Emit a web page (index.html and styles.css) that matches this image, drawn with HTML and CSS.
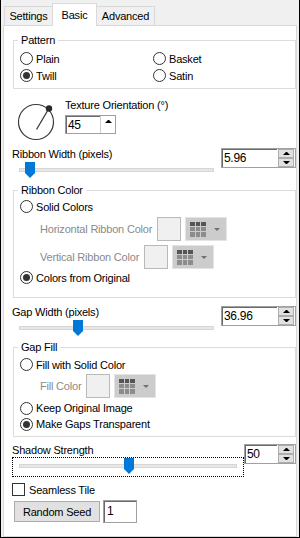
FILE: index.html
```html
<!DOCTYPE html>
<html lang="en">
<head>
<meta charset="utf-8">
<title>Basic</title>
<link rel="stylesheet" href="styles.css">
</head>
<body>
<div class="frame">
  <div class="tabs">
    <div class="tab tab-settings">Settings</div>
    <div class="tab tab-basic active">Basic</div>
    <div class="tab tab-advanced">Advanced</div>
  </div>
  <div class="panel">
    <fieldset class="group group-pattern">
      <legend>Pattern</legend>
      <div class="radio-grid">
        <div class="opt"><span class="rb"></span>Plain</div>
        <div class="opt"><span class="rb"></span>Basket</div>
        <div class="opt"><span class="rb on"></span>Twill</div>
        <div class="opt"><span class="rb"></span>Satin</div>
      </div>
    </fieldset>

    <div class="orient">
      <svg class="dial" viewBox="0 0 40 40" width="40" height="40">
        <circle cx="20" cy="20" r="17.5" fill="none" stroke="#3a3a3a" stroke-width="1.2"/>
        <line x1="20.5" y1="27.5" x2="32" y2="8" stroke="#3a3a3a" stroke-width="1.3"/>
        <circle cx="33" cy="6.5" r="3.2" fill="#2a2a2a"/>
      </svg>
      <div class="orient-col">
        <div class="lbl">Texture Orientation (°)</div>
        <div class="num num-angle"><span class="val">45</span><span class="spin spin-half"><b class="up"></b></span></div>
      </div>
    </div>

    <div class="param param-ribbon">
      <div class="param-left">
        <div class="lbl">Ribbon Width (pixels)</div>
        <div class="slider">
          <div class="track"></div>
          <svg class="thumb" style="left:12px" viewBox="0 0 10 16" width="10" height="16"><path d="M0 0H10V11L5 16L0 11Z" fill="#0078d7"/></svg>
        </div>
      </div>
      <div class="num num-wide"><span class="val">5.96</span><span class="spin"><b class="up"></b><b class="down"></b></span></div>
    </div>

    <fieldset class="group group-ribbon">
      <legend>Ribbon Color</legend>
      <div class="opt row-first"><span class="rb"></span>Solid Colors</div>
      <div class="color-row row-h">
        <span class="dim">Horizontal Ribbon Color</span>
        <span class="swatch"></span>
        <span class="drop">
          <svg class="grid-ico" viewBox="0 0 16 15" width="16" height="15">
            <rect x="0" y="0" width="5" height="4" fill="#555"/><rect x="6" y="0" width="4" height="4" fill="#555"/><rect x="11" y="0" width="5" height="4" fill="#555"/>
            <rect x="0" y="5" width="5" height="4" fill="#8c8c8c"/><rect x="6" y="5" width="4" height="4" fill="#8c8c8c"/><rect x="11" y="5" width="5" height="4" fill="#8c8c8c"/>
            <rect x="0" y="10" width="5" height="5" fill="#8c8c8c"/><rect x="6" y="10" width="4" height="5" fill="#8c8c8c"/><rect x="11" y="10" width="5" height="5" fill="#8c8c8c"/>
          </svg>
          <span class="caret"></span>
        </span>
      </div>
      <div class="color-row row-v">
        <span class="dim">Vertical Ribbon Color</span>
        <span class="swatch"></span>
        <span class="drop">
          <svg class="grid-ico" viewBox="0 0 16 15" width="16" height="15">
            <rect x="0" y="0" width="5" height="4" fill="#555"/><rect x="6" y="0" width="4" height="4" fill="#555"/><rect x="11" y="0" width="5" height="4" fill="#555"/>
            <rect x="0" y="5" width="5" height="4" fill="#8c8c8c"/><rect x="6" y="5" width="4" height="4" fill="#8c8c8c"/><rect x="11" y="5" width="5" height="4" fill="#8c8c8c"/>
            <rect x="0" y="10" width="5" height="5" fill="#8c8c8c"/><rect x="6" y="10" width="4" height="5" fill="#8c8c8c"/><rect x="11" y="10" width="5" height="5" fill="#8c8c8c"/>
          </svg>
          <span class="caret"></span>
        </span>
      </div>
      <div class="opt"><span class="rb on"></span>Colors from Original</div>
    </fieldset>

    <div class="param param-gap">
      <div class="param-left">
        <div class="lbl">Gap Width (pixels)</div>
        <div class="slider">
          <div class="track"></div>
          <svg class="thumb" style="left:60px" viewBox="0 0 10 16" width="10" height="16"><path d="M0 0H10V11L5 16L0 11Z" fill="#0078d7"/></svg>
        </div>
      </div>
      <div class="num num-wide"><span class="val">36.96</span><span class="spin"><b class="up"></b><b class="down"></b></span></div>
    </div>

    <fieldset class="group group-gap">
      <legend>Gap Fill</legend>
      <div class="opt row-first"><span class="rb"></span>Fill with Solid Color</div>
      <div class="color-row row-fill">
        <span class="dim">Fill Color</span>
        <span class="swatch"></span>
        <span class="drop">
          <svg class="grid-ico" viewBox="0 0 16 15" width="16" height="15">
            <rect x="0" y="0" width="5" height="4" fill="#555"/><rect x="6" y="0" width="4" height="4" fill="#555"/><rect x="11" y="0" width="5" height="4" fill="#555"/>
            <rect x="0" y="5" width="5" height="4" fill="#8c8c8c"/><rect x="6" y="5" width="4" height="4" fill="#8c8c8c"/><rect x="11" y="5" width="5" height="4" fill="#8c8c8c"/>
            <rect x="0" y="10" width="5" height="5" fill="#8c8c8c"/><rect x="6" y="10" width="4" height="5" fill="#8c8c8c"/><rect x="11" y="10" width="5" height="5" fill="#8c8c8c"/>
          </svg>
          <span class="caret"></span>
        </span>
      </div>
      <div class="opt opt-tight row-keep"><span class="rb"></span>Keep Original Image</div>
      <div class="opt opt-tight"><span class="rb on"></span>Make Gaps Transparent</div>
    </fieldset>

    <div class="param param-shadow">
      <div class="param-left">
        <div class="lbl">Shadow Strength</div>
        <div class="slider focused">
          <div class="track"></div>
          <svg class="thumb" style="left:111px" viewBox="0 0 10 16" width="10" height="16"><path d="M0 0H10V11L5 16L0 11Z" fill="#0078d7"/></svg>
        </div>
      </div>
      <div class="num num-short"><span class="val">50</span><span class="spin"><b class="up"></b><b class="down"></b></span></div>
    </div>

    <div class="check-row"><span class="cb"></span>Seamless Tile</div>

    <div class="seed-row">
      <button class="btn" type="button">Random Seed</button>
      <span class="seed-box">1</span>
    </div>
  </div>
</div>
</body>
</html>
```

FILE: styles.css
```css
* { box-sizing: border-box; }

html, body {
  margin: 0;
  padding: 0;
}

body {
  width: 300px;
  height: 538px;
  overflow: hidden;
  background: #f0f0f0;
  color: #000;
  font-family: "Liberation Sans", Arial, sans-serif;
  font-size: 11px;
  letter-spacing: -0.2px;
}

.frame {
  width: 300px;
  height: 538px;
  border: 1px solid #000;
  border-top: 0;
  background: #f0f0f0;
  display: flex;
  flex-direction: column;
}

/* ---------- tabs ---------- */
.tabs {
  height: 25px;
  flex: none;
  display: flex;
  align-items: flex-end;
  padding-left: 3px;
  position: relative;
  z-index: 1;
}

.tab {
  height: 19px;
  border: 1px solid #d9d9d9;
  border-bottom: 0;
  background: #f0f0f0;
  display: flex;
  align-items: center;
  justify-content: center;
  line-height: 14px;
  white-space: nowrap;
}

.tab-settings { width: 49px; }
.tab-basic { width: 45px; margin-left: -1px; }
.tab-advanced { width: 59px; margin-left: -1px; }

.tab.active {
  height: 23px;
  margin-bottom: -1px;
  background: #fff;
  position: relative;
  z-index: 2;
}

/* ---------- panel ---------- */
.panel {
  flex: 1;
  margin: 0 2px;
  background: #fff;
  border: 1px solid #d9d9d9;
  padding: 0 0 0 9px;
  display: flex;
  flex-direction: column;
}

.lbl {
  line-height: 14px;
  white-space: nowrap;
}

/* ---------- group boxes ---------- */
.group {
  margin: 0;
  min-width: 0;
  border: 1px solid #dcdcdc;
  padding: 0 0 0 6px;
}

.group legend {
  padding: 0 3px;
  margin-left: -2px;
  line-height: 14px;
}

.group-pattern { margin-top: 7px; padding-top: 3px; padding-bottom: 4px; }
.group-ribbon { margin-top: 4px; padding-top: 1px; padding-bottom: 11px; }
.group-gap { margin-top: 3px; padding-top: 2px; padding-bottom: 4px; }

.radio-grid {
  display: grid;
  grid-template-columns: 133px 1fr;
  grid-auto-rows: 17px;
}

.opt {
  height: 17px;
  display: flex;
  align-items: center;
  gap: 3px;
  white-space: nowrap;
}

.opt-tight { height: 16px; }
.row-keep { margin-top: 2px; }

.rb {
  width: 13px;
  height: 13px;
  flex: none;
  border: 1px solid #333;
  border-radius: 50%;
  background: #fff;
  display: flex;
  align-items: center;
  justify-content: center;
}

.rb.on::after {
  content: "";
  width: 7px;
  height: 7px;
  border-radius: 50%;
  background: #333;
}

/* ---------- color rows ---------- */
.color-row {
  display: flex;
  align-items: center;
  height: 24px;
  padding-left: 20px;
}

.row-h { margin-top: 2px; }
.row-v { margin-top: 4px; }
.row-fill { margin-top: 1px; }

.dim {
  color: #8a8a8a;
  white-space: nowrap;
  margin-right: 5px;
}

.swatch {
  width: 24px;
  height: 24px;
  flex: none;
  border: 1px solid #b9b9b9;
  background: #f0f0f0;
  margin-right: 4px;
}

.drop {
  width: 42px;
  height: 24px;
  flex: none;
  background: #cccccc;
  border: 1px solid #e4e4e4;
  display: flex;
  align-items: center;
  padding-left: 4px;
}

.grid-ico { display: block; flex: none; }

.caret {
  width: 0;
  height: 0;
  margin-left: 8px;
  border-left: 3px solid transparent;
  border-right: 3px solid transparent;
  border-top: 3px solid #707070;
}

/* ---------- orientation ---------- */
.orient {
  display: flex;
  align-items: flex-start;
  margin-top: 9px;
}

.dial {
  display: block;
  flex: none;
  margin: 4px 0 0 3px;
}

.orient-col {
  margin-left: 9px;
  display: flex;
  flex-direction: column;
  gap: 3px;
}

/* ---------- numeric up/down ---------- */
.num {
  display: flex;
  height: 20px;
  border: 1px solid #a0a0a0;
  background: #fff;
  flex: none;
}

.num-angle { width: 51px; height: 19px; }
.num-wide { width: 75px; margin-top: 1px; }
.num-short { width: 52px; }

.num .val {
  flex: 1;
  box-shadow: inset 1px 1px 0 #696969;
  padding-left: 2px;
  font-size: 12px;
  letter-spacing: -0.3px;
  line-height: 18px;
}

.spin {
  width: 18px;
  flex: none;
  display: flex;
  flex-direction: column;
  padding: 0 1px;
}

.spin b {
  height: 9px;
  background: #e1e1e1;
  border: 1px solid #adadad;
  display: flex;
  align-items: center;
  justify-content: center;
}

.spin-half {
  width: 15px;
  padding: 0;
  border-left: 1px solid #cfcfcf;
}

.spin-half b {
  height: 10px;
  background: #fff;
  border: 0;
}

.spin .up::after {
  content: "";
  width: 1px;
  height: 0;
  border-left: 3px solid transparent;
  border-right: 3px solid transparent;
  border-bottom: 3px solid #000;
}

.spin .down::after {
  content: "";
  width: 1px;
  height: 0;
  border-left: 3px solid transparent;
  border-right: 3px solid transparent;
  border-top: 3px solid #000;
}

/* ---------- sliders ---------- */
.param {
  display: flex;
  align-items: flex-start;
}

.param-left {
  margin-left: -1px;
  flex: none;
}

.param-ribbon { margin-top: 5px; }
.param-ribbon .param-left { width: 209px; }
.param-gap { margin-top: 7px; }
.param-gap .param-left { width: 209px; }
.param-shadow { margin-top: 7px; }
.param-shadow .param-left { width: 232px; }
.param-shadow .lbl { line-height: 13px; }

.slider {
  position: relative;
  height: 18px;
  border: 1px solid transparent;
  padding: 6px 0 0 6px;
}

.param-ribbon .slider,
.param-gap .slider { width: 203px; }

.slider.focused {
  height: 20px;
  border: 1px dotted #000;
}

.track {
  height: 4px;
  background: #e7e7e7;
  border: 1px solid #d6d6d6;
}

.param-ribbon .track,
.param-gap .track { width: 195px; }
.param-shadow .track { width: 218px; }

.thumb {
  position: absolute;
  top: 0;
  display: block;
}

/* ---------- bottom rows ---------- */
.check-row {
  display: flex;
  align-items: center;
  gap: 4px;
  height: 13px;
  margin: 6px 0 0 -1px;
  white-space: nowrap;
}

.cb {
  width: 13px;
  height: 13px;
  flex: none;
  border: 1px solid #333;
  background: #fff;
}

.seed-row {
  display: flex;
  align-items: center;
  gap: 3px;
  margin: 4px 0 0 1px;
  height: 23px;
}

.btn {
  width: 86px;
  height: 21px;
  margin: 0;
  padding: 0;
  border: 1px solid #adadad;
  background: #e1e1e1;
  font: inherit;
  letter-spacing: inherit;
  color: #000;
}

.seed-box {
  width: 34px;
  height: 23px;
  border: 1px solid #a0a0a0;
  box-shadow: inset 1px 1px 0 #696969;
  padding-left: 3px;
  font-size: 12px;
  line-height: 21px;
}
```
